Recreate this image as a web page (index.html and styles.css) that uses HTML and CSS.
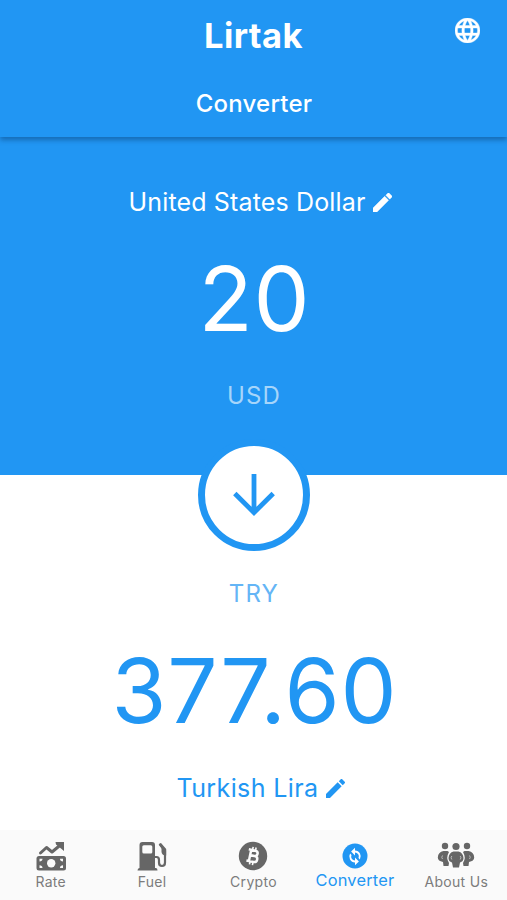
FILE: index.html
```html
<!DOCTYPE html>
<html lang="en">
<head>
<meta charset="utf-8">
<title>Lirtak</title>
<link rel="stylesheet" href="styles.css">
</head>
<body>
<div class="app">
  <header class="header">
    <h1 class="brand">Lirtak</h1>
    <h2 class="page-title">Converter</h2>
    <svg class="globe" viewBox="2 2 20 20"><path fill="currentColor" stroke="currentColor" stroke-width=".3" d="M11.99 2C6.47 2 2 6.48 2 12s4.47 10 9.99 10C17.52 22 22 17.52 22 12S17.52 2 11.99 2zm6.93 6h-2.95c-.32-1.25-.78-2.45-1.38-3.56 1.84.63 3.37 1.91 4.33 3.56zM12 4.040c.83 1.200 1.480 2.530 1.910 3.960h-3.820c.43-1.430 1.080-2.760 1.910-3.960zM4.260 14C4.100 13.360 4 12.690 4 12s.1-1.360.26-2h3.380c-.08.66-.14 1.320-.14 2s.06 1.340.14 2H4.260zm.82 2h2.950c.32 1.250.78 2.450 1.380 3.560-1.840-.63-3.370-1.900-4.330-3.560zm2.950-8H5.080c.96-1.660 2.490-2.930 4.330-3.560C8.810 5.550 8.350 6.750 8.030 8zM12 19.960c-.83-1.200-1.480-2.530-1.910-3.960h3.820c-.43 1.430-1.080 2.760-1.910 3.960zM14.340 14H9.660c-.09-.66-.16-1.320-.16-2s.07-1.350.16-2h4.680c.09.65.16 1.320.16 2s-.07 1.340-.16 2zm.25 5.560c.6-1.110 1.060-2.310 1.380-3.560h2.950c-.96 1.650-2.490 2.930-4.330 3.560zM16.360 14c.08-.66.14-1.320.14-2s-.06-1.340-.14-2h3.380c.16.64.26 1.310.26 2s-.1 1.360-.26 2h-3.380z"/></svg>
  </header>
  <section class="panel source">
    <div class="currency currency-from"><span>United States Dollar</span><svg class="pencil" viewBox="3 3 18 18"><path fill="currentColor" stroke="currentColor" stroke-width=".4" d="M3 17.25V21h3.75L17.81 9.94l-3.75-3.75L3 17.25zM20.71 7.04a1 1 0 0 0 0-1.41l-2.34-2.34a1 1 0 0 0-1.41 0l-1.83 1.83 3.75 3.75 1.83-1.83z"/></svg></div>
    <div class="amount amount-from">20</div>
    <div class="code code-from">USD</div>
    <div class="swap"><svg viewBox="0 0 42 42"><path fill="none" stroke="currentColor" stroke-width="4.8" d="M21 0v39M1.8 19.5L21 38.6 40.2 19.5"/></svg></div>
  </section>
  <section class="panel target">
    <div class="code code-to">TRY</div>
    <div class="amount amount-to">377.60</div>
    <div class="currency currency-to"><span>Turkish Lira</span><svg class="pencil" viewBox="3 3 18 18"><path fill="currentColor" d="M3 17.25V21h3.75L17.81 9.94l-3.75-3.75L3 17.25zM20.71 7.04a1 1 0 0 0 0-1.41l-2.34-2.34a1 1 0 0 0-1.41 0l-1.83 1.83 3.75 3.75 1.83-1.83z"/></svg></div>
  </section>
  <nav class="tabs">
    <div class="tab">
      <svg class="icon" viewBox="0 0 30 30"><path fill="none" stroke="currentColor" stroke-width="3" stroke-linejoin="round" stroke-linecap="round" d="M4.500 12l6-5.500 5.500 4.500L25 3.500"/><path fill="currentColor" d="M19.500 1H28v9l-3-2.500-5-4z"/><rect x="0.500" y="15" width="29.500" height="14.500" rx="2.500" fill="currentColor"/><circle class="cutout" cx="15.200" cy="22.300" r="4.200"/><path class="cutout" d="M3.500 17.700h3c0 1.800-1.200 2.800-3 2.800zM27 17.700h-3c0 1.800 1.200 2.800 3 2.800zM3.500 27h3c0-1.800-1.200-2.800-3-2.800zM27 27h-3c0-1.800 1.200-2.800 3-2.800z"/></svg>
      <span>Rate</span>
    </div>
    <div class="tab">
      <svg class="icon" viewBox="0 0 30 30"><path fill="currentColor" d="M2.500 27V4Q2.500 1 5.500 1H15q3 0 3 3v23h1q1.500 0 1.500 2.500H0.500Q0.500 27 2.500 27z"/><rect class="cutout" x="5.300" y="4.300" width="10" height="8.200" rx="1.500"/><path fill="none" stroke="currentColor" stroke-width="2.200" d="M18 16h1.500q2.500 0 2.500 3v2.500q0 3.500 3 3.500t3-3.500V10L22.500 3"/><path fill="currentColor" d="M22 3l2-1 5.200 6v6.500q-4.200 0-4.700-3.500V7z"/></svg>
      <span>Fuel</span>
    </div>
    <div class="tab">
      <svg class="icon" viewBox="0 0 30 30"><circle cx="15" cy="15" r="14.200" fill="currentColor"/><g class="coin-mark" transform="rotate(12 15 15)"><path d="M12 9.300v11.400M9.500 9.300h6.700q2.800 0 2.800 2.600t-2.800 2.800H12M16 14.700h.8q3 0 3 3t-3 3H9.500"/><path class="ticks" d="M13.300 6v3M16.300 6v3M13.300 21v3M16.300 21v3"/></g></svg>
      <span>Crypto</span>
    </div>
    <div class="tab active">
      <svg class="icon" viewBox="0 0 30 30"><circle cx="15" cy="15" r="12.500" fill="currentColor"/><path fill="#fff" d="M15 9.600V6.700l-3.900 3.800 3.900 3.900v-2.900a3.900 3.900 0 0 1 3.500 5.500l1.400 1.400A5.800 5.800 0 0 0 15 9.600zm0 9.900a3.900 3.900 0 0 1-3.500-5.500l-1.400-1.400A5.800 5.800 0 0 0 15 21.400v2.900l3.900-3.900-3.900-3.800z"/></svg>
      <span>Converter</span>
    </div>
    <div class="tab">
      <svg class="icon wide" viewBox="0 0 38 30"><g fill="currentColor"><circle cx="8" cy="5" r="3.200"/><circle cx="30" cy="5" r="3.200"/><path d="M6.500 10h4l1.500 1q-3.500 6 0 11l-.5 3h-5L6 21Q0.800 20 0.800 16.500 1 11 6.500 10zM31.500 10h-4l-1.500 1q3.500 6 0 11l.5 3h5l.5-4q5.200-1 5.200-4.500-.2-5.500-5.700-6.500z"/><circle cx="19" cy="5.500" r="3.600"/><path d="M16.500 10.500h5q4.500 1 5 6.500 0 3.500-3.500 4.500L22 26.500h-6l-1-5q-3.500-1-3.500-4.500 .5-5.500 5-6.500z"/></g><path class="arms" d="M5.500 14.500q-1.500 1.800 0 3.500M14.800 15q-1.500 1.800 0 3.500M23.200 15q1.500 1.800 0 3.500M32.500 14.500q1.500 1.800 0 3.500"/></svg>
      <span>About Us</span>
    </div>
  </nav>
</div>
</body>
</html>
```
FILE: styles.css
```css
* { box-sizing: border-box; }
body { margin: 0; font-family: Inter, "Liberation Sans", sans-serif; }
.app { width: 507px; height: 900px; display: flex; flex-direction: column; overflow: hidden; background: #fff; }
.header {
  position: relative; z-index: 1; height: 137px; flex: none;
  background: #2196f3; color: #fff; text-align: center;
  box-shadow: 0 3px 5px rgba(0, 30, 70, .36);
}
.brand { margin: 0; padding-top: 14px; font-size: 34.500px; line-height: 44px; font-weight: 700; letter-spacing: .4px; }
.page-title { margin: 0; padding-top: 30px; font-size: 24px; line-height: 32px; font-weight: 500; letter-spacing: .2px; text-indent: 1px; }
.globe { position: absolute; top: 18px; right: 27px; width: 25px; height: 25px; }
.panel { display: flex; flex-direction: column; align-items: center; flex: none; }
.source { position: relative; z-index: 0; height: 338px; background: #2196f3; color: #fff; }
.target { height: 355px; color: #2196f3; }
.currency { display: flex; align-items: center; gap: 8px; font-size: 25px; line-height: 32px; white-space: nowrap; }
.currency-from { margin: 49px 0 0 14px; letter-spacing: .15px; }
.pencil { width: 19px; height: 19px; }
.amount { font-size: 89px; line-height: 100px; letter-spacing: .8px; padding-left: 2px; }
.amount-from { margin-top: 31px; }
.code { font-size: 24px; line-height: 32px; letter-spacing: 1.2px; padding-left: 1px; }
.code-from { margin-top: 31px; color: #a6d5fa; }
.swap {
  position: absolute; top: 302px; left: 198px; width: 112px; height: 112px;
  border: 7px solid #2196f3; border-radius: 50%; background: #fff; color: #2196f3;
  display: flex; align-items: center; justify-content: center;
}
.swap svg { width: 42px; height: 42px; }
.code-to { margin-top: 103px; color: #64b5f6; }
.amount-to { margin-top: 31px; }
.currency-to { margin: 31px 0 0 14px; gap: 7px; letter-spacing: .4px; }
.tabs { display: grid; grid-template-columns: repeat(5, 1fr); height: 70px; flex: none; background: #fafafa; color: #666; }
.tab { display: flex; flex-direction: column; align-items: center; padding-top: 11px; font-size: 14px; line-height: 20px; letter-spacing: .3px; white-space: nowrap; }
.tab span { margin-top: 1px; color: #7c7c7c; }
.icon { width: 30px; height: 30px; flex: none; }
.wide { width: 38px; }
.cutout { fill: #fafafa; }
.coin-mark { fill: none; stroke: #fafafa; stroke-width: 2.5; }
.ticks { stroke-width: 1.6; }
.arms { fill: none; stroke: #bbb; stroke-width: 1; }
.tab.active { color: #2196f3; font-size: 16.400px; letter-spacing: .2px; }
.tab.active span { margin-top: -1px; color: #2196f3; }
```
